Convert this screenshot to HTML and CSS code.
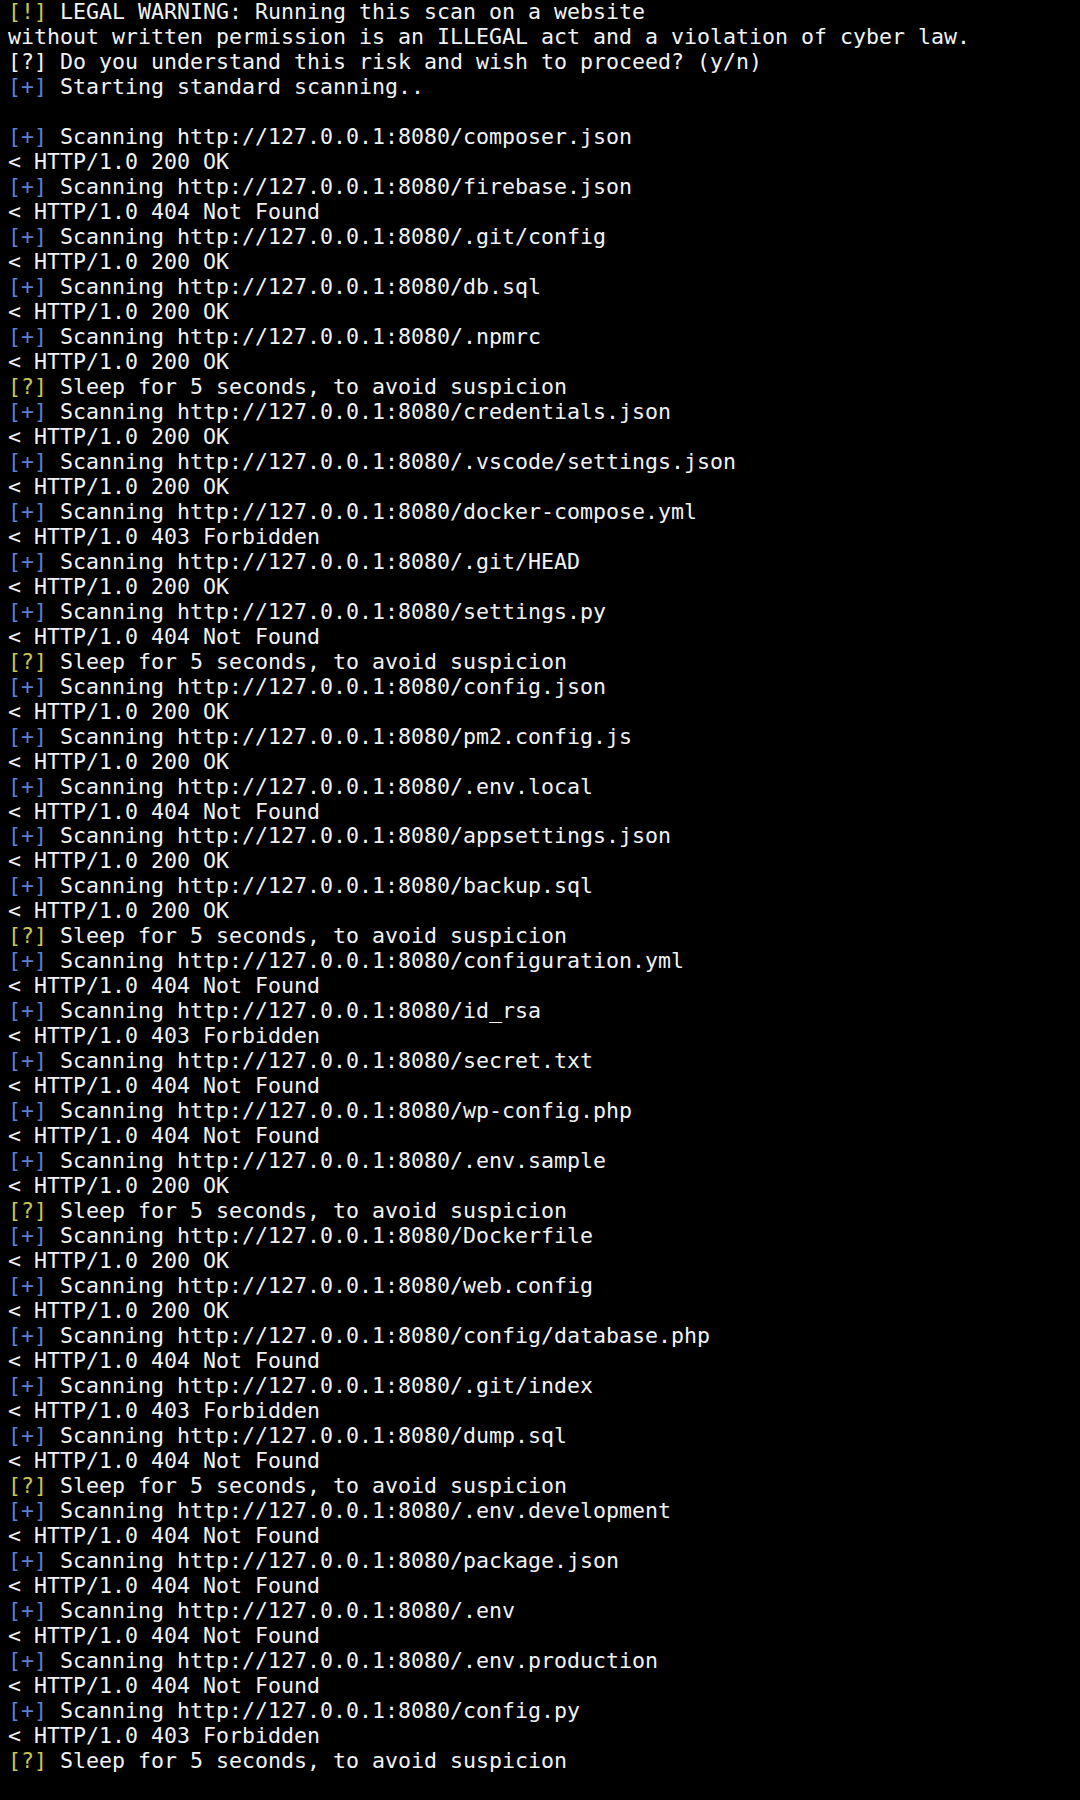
FILE: index.html
```html
<!DOCTYPE html>
<html>
<head>
<meta charset="utf-8">
<link rel="stylesheet" href="styles.css">
</head>
<body>
<pre class="term"><span class="y">[!]</span> LEGAL WARNING: Running this scan on a website
without written permission is an ILLEGAL act and a violation of cyber law.
[?] Do you understand this risk and wish to proceed? (y/n)
<span class="b">[+]</span> Starting standard scanning..

<span class="b">[+]</span> Scanning http://127.0.0.1:8080/composer.json
&lt; HTTP/1.0 200 OK
<span class="b">[+]</span> Scanning http://127.0.0.1:8080/firebase.json
&lt; HTTP/1.0 404 Not Found
<span class="b">[+]</span> Scanning http://127.0.0.1:8080/.git/config
&lt; HTTP/1.0 200 OK
<span class="b">[+]</span> Scanning http://127.0.0.1:8080/db.sql
&lt; HTTP/1.0 200 OK
<span class="b">[+]</span> Scanning http://127.0.0.1:8080/.npmrc
&lt; HTTP/1.0 200 OK
<span class="y">[?]</span> Sleep for 5 seconds, to avoid suspicion
<span class="b">[+]</span> Scanning http://127.0.0.1:8080/credentials.json
&lt; HTTP/1.0 200 OK
<span class="b">[+]</span> Scanning http://127.0.0.1:8080/.vscode/settings.json
&lt; HTTP/1.0 200 OK
<span class="b">[+]</span> Scanning http://127.0.0.1:8080/docker-compose.yml
&lt; HTTP/1.0 403 Forbidden
<span class="b">[+]</span> Scanning http://127.0.0.1:8080/.git/HEAD
&lt; HTTP/1.0 200 OK
<span class="b">[+]</span> Scanning http://127.0.0.1:8080/settings.py
&lt; HTTP/1.0 404 Not Found
<span class="y">[?]</span> Sleep for 5 seconds, to avoid suspicion
<span class="b">[+]</span> Scanning http://127.0.0.1:8080/config.json
&lt; HTTP/1.0 200 OK
<span class="b">[+]</span> Scanning http://127.0.0.1:8080/pm2.config.js
&lt; HTTP/1.0 200 OK
<span class="b">[+]</span> Scanning http://127.0.0.1:8080/.env.local
&lt; HTTP/1.0 404 Not Found
<span class="b">[+]</span> Scanning http://127.0.0.1:8080/appsettings.json
&lt; HTTP/1.0 200 OK
<span class="b">[+]</span> Scanning http://127.0.0.1:8080/backup.sql
&lt; HTTP/1.0 200 OK
<span class="y">[?]</span> Sleep for 5 seconds, to avoid suspicion
<span class="b">[+]</span> Scanning http://127.0.0.1:8080/configuration.yml
&lt; HTTP/1.0 404 Not Found
<span class="b">[+]</span> Scanning http://127.0.0.1:8080/id_rsa
&lt; HTTP/1.0 403 Forbidden
<span class="b">[+]</span> Scanning http://127.0.0.1:8080/secret.txt
&lt; HTTP/1.0 404 Not Found
<span class="b">[+]</span> Scanning http://127.0.0.1:8080/wp-config.php
&lt; HTTP/1.0 404 Not Found
<span class="b">[+]</span> Scanning http://127.0.0.1:8080/.env.sample
&lt; HTTP/1.0 200 OK
<span class="y">[?]</span> Sleep for 5 seconds, to avoid suspicion
<span class="b">[+]</span> Scanning http://127.0.0.1:8080/Dockerfile
&lt; HTTP/1.0 200 OK
<span class="b">[+]</span> Scanning http://127.0.0.1:8080/web.config
&lt; HTTP/1.0 200 OK
<span class="b">[+]</span> Scanning http://127.0.0.1:8080/config/database.php
&lt; HTTP/1.0 404 Not Found
<span class="b">[+]</span> Scanning http://127.0.0.1:8080/.git/index
&lt; HTTP/1.0 403 Forbidden
<span class="b">[+]</span> Scanning http://127.0.0.1:8080/dump.sql
&lt; HTTP/1.0 404 Not Found
<span class="y">[?]</span> Sleep for 5 seconds, to avoid suspicion
<span class="b">[+]</span> Scanning http://127.0.0.1:8080/.env.development
&lt; HTTP/1.0 404 Not Found
<span class="b">[+]</span> Scanning http://127.0.0.1:8080/package.json
&lt; HTTP/1.0 404 Not Found
<span class="b">[+]</span> Scanning http://127.0.0.1:8080/.env
&lt; HTTP/1.0 404 Not Found
<span class="b">[+]</span> Scanning http://127.0.0.1:8080/.env.production
&lt; HTTP/1.0 404 Not Found
<span class="b">[+]</span> Scanning http://127.0.0.1:8080/config.py
&lt; HTTP/1.0 403 Forbidden
<span class="y">[?]</span> Sleep for 5 seconds, to avoid suspicion
</pre>
</body>
</html>
```
FILE: styles.css
```css
html, body {
  margin: 0;
  padding: 0;
  background: #000;
  height: 100%;
}
.term {
  margin: -1px 0 0 0;
  padding: 0 0 0 8px;
  font-family: "DejaVu Sans Mono", "Liberation Mono", monospace;
  font-size: 21.6px;
  line-height: 24.98px;
  color: #f2f2f2;
  white-space: pre;
}
.y { color: #c6c84e; }
.b { color: #5b7fd2; }
```
